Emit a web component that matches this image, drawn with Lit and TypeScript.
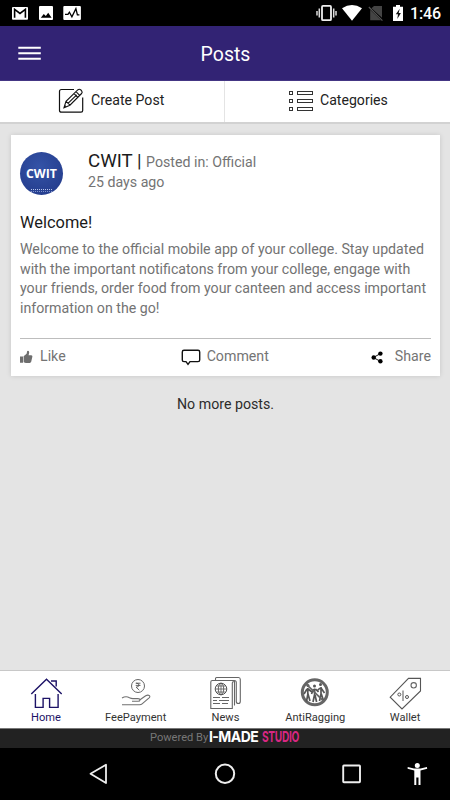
import { LitElement, html, css, svg } from "lit";
import { customElement } from "lit/decorators.js";

/* Icons share one screen-space coordinate system; each viewBox frames its own area. */
const icon = (x: number, y: number, w: number, h: number, body: unknown) =>
  html`<svg width=${w} height=${h} viewBox="${x} ${y} ${w} ${h}" fill="none" aria-hidden="true">${body}</svg>`;

const icons = {
  notifications: icon(10, 4, 74, 18, svg`
    <rect x="12" y="7" width="16" height="12.7" rx="1" fill="#fff"/>
    <path d="M14.6 17.8V9.3L20 13.4l5.4-4.1v8.5" stroke="#000" stroke-width="1.6"/>
    <rect x="39" y="6" width="14" height="14" rx="1" fill="#fff"/>
    <path d="M40.8 17.8l3-3.8 2 2 2.4-3.2 3.4 5z" fill="#000"/>
    <rect x="63.3" y="6" width="17.6" height="14" rx="1" fill="#fff"/>
    <path d="M65 14.4h3l1.4-2.2 2.5 4.6 4-8.2 1.5 6.2h2" stroke="#000" stroke-width="1.3"/>`),
  system: icon(314, 3, 92, 20, svg`
    <rect x="322" y="5.9" width="9" height="14.3" rx="1" stroke="#eee" stroke-width="1.8"/>
    <path d="M319.3 8.5v9M317 11v4.5M333.7 8.5v9M336 11v4.5" stroke="#ddd" stroke-width="1.5"/>
    <path d="M342 8.3Q352 1.8 362 8.3L352 20.8z" fill="#fff"/>
    <path d="M374 6h8v11.8L371.5 8.2zM370.2 9.8l10.8 10.4H370.2z" fill="#444"/>
    <path d="M368.8 7l13.6 13.6" stroke="#555" stroke-width="1.1"/>
    <path d="M396 5h4v1.7h3V21h-10V6.7h3z" fill="#fff"/>
    <path d="M399.7 8.8l-3.9 5.4h2.2l-.7 4.7 3.6-5.9h-2.2z" fill="#111"/>`),
  menu: icon(18, 46, 24, 15, svg`<path d="M18.3 47.7h22.5M18.3 53.2h22.5M18.3 58.7h22.5" stroke="#fff" stroke-width="2"/>`),
  create: icon(58, 89, 26, 26, svg`
    <path d="M74 90.5H61.5q-2 0-2 2v19q0 1.7 2 1.7H81q1.7 0 1.7-1.7V98.5" stroke="#111" stroke-width="1.2"/>
    <path d="M64 108.7l2-6.3 12-11.7q1.5-1 2.900.3l.7.8q1.200 1.5 0 2.7l-11.7 11.7zM76 92.700l3.700 3.600M74 94.600l3.600 3.600M66 102.400l4 3.700M68 104.300l8.700-8.500M63.800 108.900l1.700-2.500" stroke="#111" stroke-width="1.1"/>`),
  list: icon(288, 91, 26, 22, svg`
    ${[92.5, 100.5, 108.5].map((y) => svg`
      <rect x="289.5" y=${y} width="3" height="3" stroke="#333"/>
      <rect x="297.5" y=${y} width="15" height="3" stroke="#333"/>`)}`),
  like: icon(19, 349, 14, 14, svg`<path d="M20 355.500h3v6.300h-3zM23.600 355.300l3-2.600.6-2.700q2-.7 2 1.400l-.6 2.800h2.700q1.300.2 1.100 1.400l-1.200 5.200q-.4 1.100-1.400 1.100h-4l-2.200-.7z" fill="#6e6e6e"/>`),
  comment: icon(181, 347, 20, 19, svg`<path d="M184 349.200h14q1.700 0 1.700 1.700v8q0 1.700-1.700 1.700h-8l-2 2.700-2-2.700h-2q-1.700 0-1.700-1.700v-8q0-1.700 1.700-1.700z" stroke="#111" stroke-width="1.4"/>`),
  share: icon(370, 350, 14, 14, svg`<path d="M380.500 353.500l-7 4 7 4" stroke="#111"/><circle cx="380.400" cy="353.600" r="2.200" fill="#000"/><circle cx="373.700" cy="357.500" r="2.200" fill="#000"/><circle cx="380.400" cy="361.300" r="2.200" fill="#000"/>`),
  home: icon(28, 676, 34, 34, svg`
    <path d="M30.300 694L45.500 679.200 60.700 694M34.400 694v13.400h7.700v-9h6.500v9h8.500V694M50 681h5.200v5.500" stroke="#1c1266" stroke-width="1.400"/>`),
  fee: icon(119, 677, 32, 32, svg`
    <circle cx="137" cy="687" r="6.500" stroke="#666"/>
    <path d="M134.700 684.200h4.800M134.700 686.400h4.800M135.200 684.200q3 0 2.800 2t-2.900 2l3.200 3" stroke="#555" stroke-width=".9"/>
    <path d="M121 699q4-2.300 7.500-.2 2 1 4 .8h4.500q2 0 2 1.300t-2 1.300h-6M139 700.800l5.700-4q2.200-1.300 3.700-.2 1 1-.3 2.200l-7 6q-1 .9-2.500.9H121" stroke="#707070" stroke-width="1.100"/>`),
  news: icon(208, 676, 34, 34, svg`
    <path d="M215.500 680v-1.500q0-1 1-1h22q1.800 0 1.800 2v22q0 2-2 2t-2-2v-19q0-2-2-2h-22q-1.500 0-1.500 1.500v26.500h21.500V683q0-1.500 1.700-1.500M234.500 681v24.500" stroke="#666" stroke-width="1.1"/>
    <circle cx="221" cy="689" r="5.800" stroke="#555"/>
    <ellipse cx="221" cy="689" rx="2.700" ry="5.800" stroke="#555" stroke-width=".9"/>
    <path d="M221 683v12M215 689h12M216.200 686h9.600M216.200 692h9.600" stroke="#555" stroke-width=".8"/>
    <path d="M213 697.500h7M222 697.500h7M213 700.500h4M219 700.500h10M213 703.500h7M222 703.500h6" stroke="#666"/>`),
  antiRagging: icon(300, 676, 32, 33, svg`
    <circle cx="315.800" cy="692.300" r="12.500" stroke="#666" stroke-width="3"/>
    <g stroke="#555" stroke-width="1.700">
      <path d="M308.800 688v6.500l-1.300 7M309 694l2 7M308 689l-3 5M309 689l4 3"/>
      <path d="M315.600 688.500v6l-1.600 7.500M316 695l1.600 7M314.500 689l-2 5M316.500 689l3 3"/>
      <path d="M322 687v7l-1.500 7M322.300 694l2 6M322 688l3.500 5M321 688l-3 3"/>
    </g>
    <g fill="#555"><circle cx="309" cy="685.500" r="1.500"/><circle cx="315.500" cy="686" r="1.500"/><circle cx="321.500" cy="684.500" r="1.500"/></g>
    <path d="M306.500 683.300l18.300 18" stroke="#666" stroke-width="1.700"/>`),
  wallet: icon(388, 675, 34, 35, svg`
    <path d="M408.500 677.400h12v12.500L402 708l-11.800-11.800z" stroke="#555" stroke-width="1.100"/>
    <circle cx="413.700" cy="684.300" r="2.700" stroke="#666" stroke-width="1.100"/>
    <circle cx="399.300" cy="693.500" r="1.500" stroke="#555"/><circle cx="407" cy="696" r="1.500" stroke="#555"/>
    <path d="M403 689.500v10.500" stroke="#555"/>`),
  back: icon(88, 762, 20, 24, svg`<path d="M106 764.700v18.300l-15.500-9.200z" stroke="#eee" stroke-width="1.800" stroke-linejoin="round"/>`),
  circle: icon(213, 762, 24, 24, svg`<circle cx="225" cy="773.700" r="9.200" stroke="#eee" stroke-width="2"/>`),
  square: icon(341, 762, 22, 24, svg`<rect x="343.200" y="765.500" width="16.800" height="16.700" rx=".7" stroke="#eee" stroke-width="1.900"/>`),
  person: icon(406, 762, 22, 24, svg`<circle cx="417.300" cy="765.500" r="2.500" fill="#fff"/><path d="M407.700 767l6.300 1.400h6.600l6.300-1.400.3 1.800-6.700 1.600V785h-2v-7.500h-2.200v7.500h-2v-14.600l-6.700-1.600z" fill="#fff"/>`),
};

@customElement("app-root")
export class AppRoot extends LitElement {
  static styles = css`
    :host { display: flex; flex-direction: column; width: 450px; height: 800px; overflow: hidden;
      background: #e4e4e4; font-family: Roboto, sans-serif; font-size: 14.2px; color: #2c2c2c; }
    * { box-sizing: border-box; }
    svg { display: block; flex: none; }
    .status { height: 26px; background: #000; color: #fff; display: flex; justify-content: space-between; padding: 4px 0 0 10px; flex: none; }
    .right { display: flex; margin-top: -1px; width: 136px; }
    .clock { font-size: 16px; font-weight: 500; line-height: 22px; margin-left: 4px; letter-spacing: -.1px; }
    .bar { height: 55px; background: #322374; display: grid; grid-template-columns: 60px 1fr 60px; align-items: center; flex: none; color: #fff; border-bottom: 1px solid #443684; }
    .menu { padding-left: 18px; }
    .title { text-align: center; font-size: 19.5px; line-height: 24px; padding: 3px 0 0 1px; }
    .tabs { height: 43px; background: #fff; display: flex; flex: none; border-bottom: 2px solid #d2d2d2; }
    .tab { flex: 0 0 50%; display: flex; align-items: center; padding: 0 0 1px 63px; gap: 6px; color: #222; font-size: 14.1px; }
    .tab span { margin-top: -2px; }
    .tab.first { padding-left: 58px; gap: 7px; border-right: 1px solid #e4e4e4; }
    .feed { flex: 1; display: flex; flex-direction: column; padding: 11px 10px 0 11px; min-height: 0; }
    .card { background: #fff; height: 241px; padding: 0 9px; box-shadow: 0 0 5px rgba(0,0,0,.13); }
    .author { display: flex; padding-top: 17px; height: 76px; }
    .avatar { width: 43px; height: 43px; border-radius: 50%; margin: 0 25px 0 0; background: radial-gradient(circle at 45% 35%, #3453a7, #213887); color: #fff; display: flex; flex-direction: column; align-items: center; font: 700 12.3px/43px "Open Sans", sans-serif; position: relative; }
    .seal { position: absolute; bottom: 3px; width: 21px; height: 3px; border-top: 1px dotted #b9c6ec; border-bottom: 1px dotted #8093cc; }
    .byline { line-height: 20px; color: #747474; margin-top: -1px; }
    .name { font-size: 18.7px; color: #1b1b1b; }
    .posted { margin-left: 1px; }
    .heading { font-size: 16.4px; line-height: 23px; color: #1a1a1a; }
    .body { line-height: 19.7px; color: #737373; margin: 6px 0 0; white-space: nowrap; height: 79px; }
    .actions { margin-top: 19px; border-top: 1px solid #bdbdbd; height: 37px; display: flex; align-items: center; color: #747474; }
    .actions span { margin-top: -2px; }
    .action { display: flex; align-items: center; gap: 7px; margin-left: -1px; }
    .commenting { margin-left: auto; margin-right: 101px; gap: 6px; }
    .sharing { gap: 11px; margin-left: 0; }
    .end { text-align: center; line-height: 20px; margin-top: 18px; }
    .nav { height: 58px; background: #fff; border-top: 1px solid #c8c8c8; display: grid; grid-template-columns: repeat(5, 1fr); padding-left: 1px; flex: none; }
    .item { display: flex; flex-direction: column; align-items: center; font-size: 11.1px; line-height: 14px; color: #333; padding-top: 5px; }
    .item span { height: 35px; display: flex; align-items: flex-start; }
    .active { color: #1c1266; }
    .powered { height: 20px; background: #222; border-top: 1px solid #777; display: flex; align-items: center; padding: 0 0 3px 150px; color: #777; font-size: 11.1px; gap: 1px; white-space: nowrap; flex: none; }
    .brand { font: 700 15.2px/18px Inter, sans-serif; color: #fff; letter-spacing: -.6px; display: inline-flex; gap: 3px; }
    .made { width: 50px; transform: scaleX(.92); transform-origin: left; }
    .studio { color: #d92782; transform: scaleX(.67); transform-origin: left; letter-spacing: -.5px; }
    .keys { height: 52px; background: #000; display: flex; flex: none; align-items: flex-start; padding: 14px 22px 0 88px; }
    .circle { margin-left: 105px; }
    .square { margin-left: 104px; }
    .person { margin-left: 43px; }
  `;

  private tabs = [
    { label: "Home", icon: icons.home },
    { label: "FeePayment", icon: icons.fee },
    { label: "News", icon: icons.news },
    { label: "AntiRagging", icon: icons.antiRagging },
    { label: "Wallet", icon: icons.wallet },
  ];

  render() {
    return html`
      <div class="status">${icons.notifications}<div class="right">${icons.system}<div class="clock">1:46</div></div></div>
      <header class="bar"><div class="menu">${icons.menu}</div><div class="title">Posts</div></header>
      <div class="tabs">
        <div class="tab first">${icons.create}<span>Create Post</span></div>
        <div class="tab">${icons.list}<span>Categories</span></div>
      </div>
      <main class="feed">
        <article class="card">
          <div class="author">
            <div class="avatar">CWIT<div class="seal"></div></div>
            <div class="byline"><span class="name">CWIT |</span> <span class="posted">Posted in: Official</span><br>25 days ago</div>
          </div>
          <div class="heading">Welcome!</div>
          <p class="body">Welcome to the official mobile app of your college. Stay updated<br>with the important notificatons from your college, engage with<br>your friends, order food from your canteen and access important<br>information on the go!</p>
          <div class="actions">
            <div class="action">${icons.like}<span>Like</span></div>
            <div class="action commenting">${icons.comment}<span>Comment</span></div>
            <div class="action sharing">${icons.share}<span>Share</span></div>
          </div>
        </article>
        <div class="end">No more posts.</div>
      </main>
      <nav class="nav">
        ${this.tabs.map((t, i) => html`<div class="item ${i === 0 ? "active" : ""}"><span>${t.icon}</span>${t.label}</div>`)}
      </nav>
      <div class="powered">Powered By <div class="brand"><span class="made">I-MADE</span><span class="studio">STUDIO</span></div></div>
      <div class="keys">
        <div>${icons.back}</div><div class="circle">${icons.circle}</div><div class="square">${icons.square}</div><div class="person">${icons.person}</div>
      </div>`;
  }
}
